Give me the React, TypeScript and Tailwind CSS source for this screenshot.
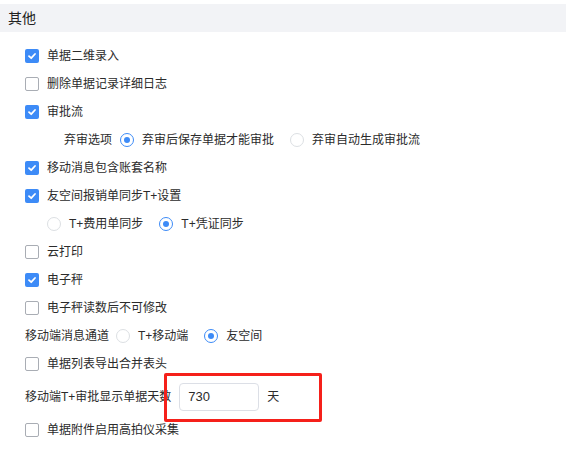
import React from 'react'

const font = { fontFamily: '"Liberation Sans", "Noto Sans CJK SC", sans-serif' }

function Check({ checked, label }: { checked?: boolean; label: string }) {
  return (
    <div className="flex h-[28px] items-center pl-[25px]">
      {checked ? (
        <span className="flex h-[14px] w-[14px] items-center justify-center rounded-[2px] bg-[#3d8bf7]">
          <svg width="10" height="10" viewBox="0 0 10 10">
            <path d="M2 5.2 L4.2 7.2 L8 3" fill="none" stroke="#fff" strokeWidth="1.8" strokeLinecap="round" strokeLinejoin="round" />
          </svg>
        </span>
      ) : (
        <span className="h-[14px] w-[14px] rounded-[2px] border border-[#a9adb4] bg-white" />
      )}
      <span className="ml-[8px]">{label}</span>
    </div>
  )
}

function Radio({ checked, label, className = '' }: { checked?: boolean; label: string; className?: string }) {
  return (
    <span className={'flex items-center ' + className}>
      {checked ? (
        <span className="flex h-[14px] w-[14px] items-center justify-center rounded-full border border-[#3d8bf7]">
          <span className="h-[6px] w-[6px] rounded-full bg-[#3d8bf7]" />
        </span>
      ) : (
        <span className="h-[14px] w-[14px] rounded-full border border-[#dcdfe3]" />
      )}
      <span className="ml-[8px]">{label}</span>
    </span>
  )
}

export default function App() {
  return (
    <div className="h-[450px] w-[567px] bg-white text-[12px] text-[#2b2b2b]" style={font}>
      <div className="h-[4px]" />
      <div className="flex h-[28px] w-[566px] items-center bg-[#f2f3f6] pl-[8px] text-[14px] text-[#222]">其他</div>
      <div className="pt-[10px]">
        <Check checked label="单据二维录入" />
        <Check label="删除单据记录详细日志" />
        <Check checked label="审批流" />
        <div className="flex h-[28px] items-center pl-[64px]">
          <span className="mr-[8px]">弃审选项</span>
          <Radio checked label="弃审后保存单据才能审批" />
          <Radio label="弃审自动生成审批流" className="ml-[16px]" />
        </div>
        <Check checked label="移动消息包含账套名称" />
        <Check checked label="友空间报销单同步T+设置" />
        <div className="flex h-[28px] items-center pl-[47px]">
          <Radio label="T+费用单同步" />
          <Radio checked label="T+凭证同步" className="ml-[16px]" />
        </div>
        <Check label="云打印" />
        <Check checked label="电子秤" />
        <Check label="电子秤读数后不可修改" />
        <div className="flex h-[28px] items-center pl-[25px]">
          <span className="mr-[7px]">移动端消息通道</span>
          <Radio label="T+移动端" />
          <Radio checked label="友空间" className="ml-[16px]" />
        </div>
        <Check label="单据列表导出合并表头" />
        <div className="relative flex h-[38px] items-center pl-[25px]">
          <span>移动端T+审批显示单据天数</span>
          <div className="ml-[8px] flex h-[28px] w-[80px] items-center rounded-[4px] border border-[#dcdfe6] px-[8px] text-[13px]">730</div>
          <span className="ml-[8px]">天</span>
          <div className="absolute left-[164px] top-[-5px] h-[49px] w-[158px] rounded-[2px] border-[3px] border-[#f5201a]" />
        </div>
        <Check label="单据附件启用高拍仪采集" />
      </div>
    </div>
  )
}
